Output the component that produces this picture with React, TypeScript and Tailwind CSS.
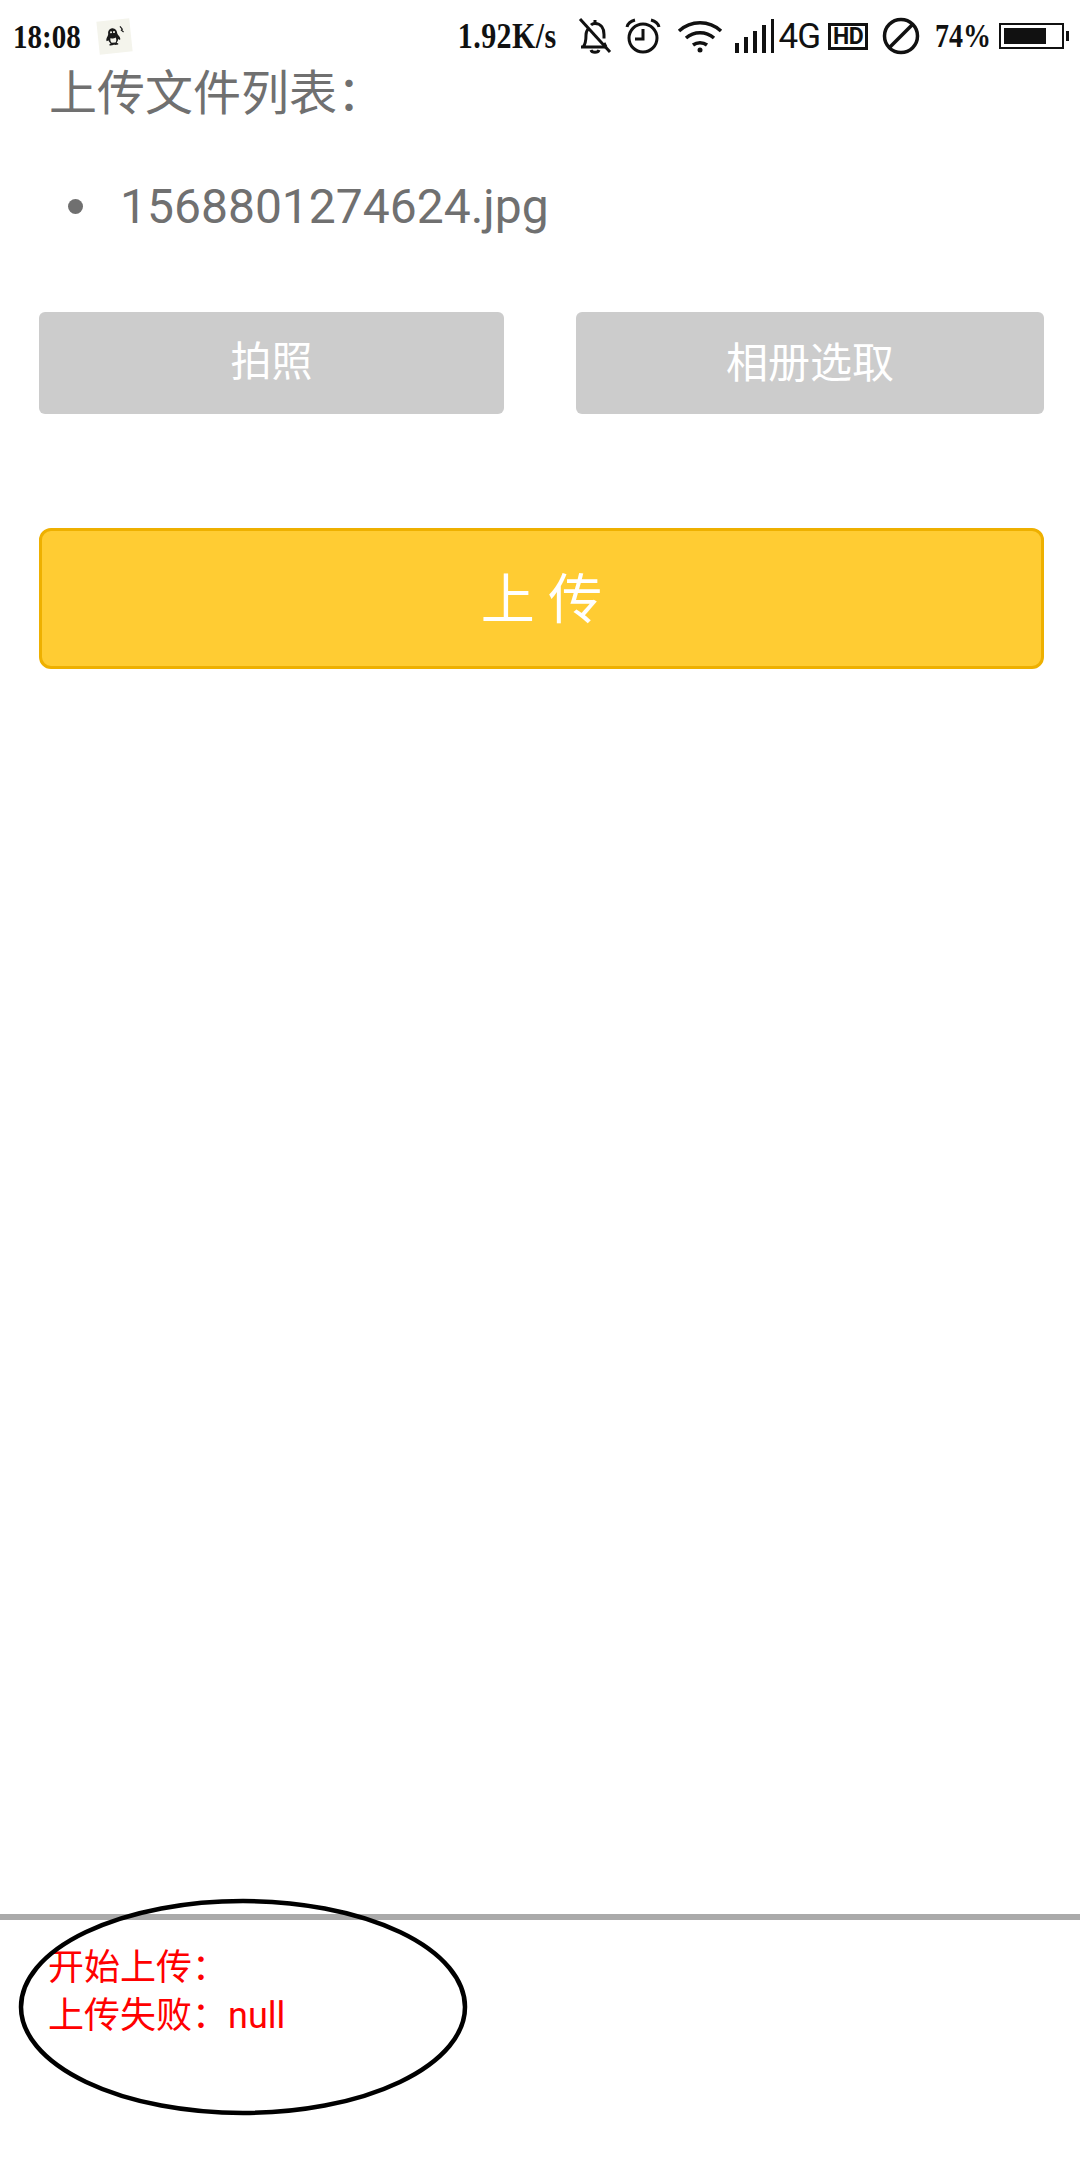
const cjk = "font-['Roboto','Noto_Sans_CJK_SC',sans-serif]";

function Penguin() {
  return (
    <div className="flex h-[33px] w-[33px] rotate-[-6deg] items-center justify-center bg-[#f4f4ec]">
      <svg width="22" height="22" viewBox="0 0 22 22">
        <path d="M9 2c-3 0-4.500 2.500-4.500 5 0 1-.5 2-1.500 3.500C2 12 1.500 14 2.500 14.500L4 13.500C4.500 15 5 16 6 17c-1 .5-2 1-1.500 1.700.8.600 3 .4 4.500 0 1.500.4 3.700.6 4.500 0 .5-.7-.5-1.200-1.500-1.700 1-1 1.500-2 2-3.500l1.500 1c1-.5.500-2.500-.5-4C14 9 13.500 8 13.500 7 13.500 4.500 12 2 9 2z" fill="#1a1a1a" />
        <path d="M6.500 11.500c1.500 1 3.500 1 5 0 .8 1.500.6 3.500-.5 5h-4c-1.100-1.500-1.300-3.500-.5-5z" fill="#f4f4ec" />
        <circle cx="7.500" cy="6" r="1" fill="#f4f4ec" />
        <circle cx="10.500" cy="6" r="1" fill="#f4f4ec" />
        <path d="M17 1l2 3-1 1 2 2" fill="none" stroke="#1a1a1a" strokeWidth="1.200" />
      </svg>
    </div>
  );
}

function StatusBar() {
  return (
    <div className="flex h-[70px] items-center pl-[13px] pr-[11px] pt-[2px] text-[#111] font-['Liberation_Serif',serif] font-bold">
      <span className="scale-y-[1.18] text-[29px] leading-none">18:08</span>
      <div className="ml-[17px]">
        <Penguin />
      </div>
      <span className="ml-auto scale-y-[1.18] text-[30px] leading-none tracking-[0.4px]">1.92K/s</span>

      {/* bell off */}
      <svg className="ml-[22px]" width="34" height="38" viewBox="0 0 34 38" fill="none" stroke="#111" strokeWidth="3">
        <path d="M3 30h24M5 30c3-3 3-7 3-12 0-3 1-5 3-7M13 8c1-1 3-1.500 4-1.500 6 0 9 5 9 11v4M26 26l2 4" />
        <path d="M17 3v3M13 33c1 3 7 3 8 0" />
        <path d="M2 2l30 33" />
      </svg>
      {/* alarm */}
      <svg className="ml-[12px]" width="38" height="38" viewBox="0 0 38 38" fill="none" stroke="#111" strokeWidth="3">
        <circle cx="19" cy="21" r="14" />
        <path d="M19 12v10h-8" />
        <path d="M3 10c1-4 4-6 8-7M35 10c-1-4-4-6-8-7" />
      </svg>
      {/* wifi */}
      <svg className="ml-[15px]" width="46" height="34" viewBox="0 0 46 34" fill="none" stroke="#111" strokeWidth="3.500">
        <path d="M2 12c12-11 30-11 42 0M9 19c8-7 20-7 28 0M16 26c4-3 10-3 14 0" />
        <circle cx="23" cy="31" r="2.500" fill="#111" stroke="none" />
      </svg>
      {/* signal */}
      <svg className="ml-[12px]" width="40" height="34" viewBox="0 0 40 34" fill="#111">
        <rect x="0" y="24" width="4" height="10" />
        <rect x="9" y="18" width="4" height="16" />
        <rect x="18" y="12" width="4" height="22" />
        <rect x="27" y="6" width="4" height="28" />
        <rect x="36" y="0" width="3" height="34" />
      </svg>
      <span className="ml-[3px] font-['Roboto',sans-serif] text-[35px] font-normal leading-none tracking-[-1px]">4G</span>
      <span className="ml-[8px] flex h-[27px] w-[40px] items-center justify-center border-[3px] border-[#111] font-['Roboto',sans-serif] text-[23px] font-bold leading-none tracking-[-0.5px]">
        HD
      </span>
      {/* do not disturb */}
      <svg className="ml-[14px]" width="38" height="38" viewBox="0 0 38 38" fill="none" stroke="#111" strokeWidth="3.500">
        <circle cx="19" cy="19" r="16.500" />
        <path d="M8 30L30 8" />
      </svg>
      <span className="ml-[15px] scale-y-[1.18] text-[28px] leading-none">74%</span>
      {/* battery */}
      <div className="ml-[8px] flex items-center">
        <div className="flex h-[26px] w-[65px] items-stretch border-[2px] border-[#111] p-[3px]">
          <div className="w-[76%] bg-[#111]" />
        </div>
        <div className="ml-[2px] h-[10px] w-[3px] bg-[#111]" />
      </div>
    </div>
  );
}

export default function App() {
  return (
    <div className={`relative flex h-[2160px] w-[1080px] flex-col overflow-hidden bg-white ${cjk}`}>
      <StatusBar />

      <div className="mt-[-6px] pl-[49px] text-[48px] leading-[60px] text-[#707070]">上传文件列表：</div>

      <ul className="mt-[53px] pl-[120px] text-[48px] leading-[60px] text-[#707070]">
        <li className="relative">
          <span className="absolute left-[-52px] top-[22px] h-[15px] w-[15px] rounded-full bg-[#707070]" />
          1568801274624.jpg
        </li>
      </ul>

      <div className="mt-[75px] flex gap-[72px] pl-[39px] pr-[36px]">
        <button className="flex h-[102px] w-[465px] items-center justify-center rounded-[6px] bg-[#cccccc] text-[41px] text-white">
          拍照
        </button>
        <button className="flex h-[102px] w-[468px] items-center justify-center rounded-[6px] bg-[#cccccc] text-[42px] text-white">
          相册选取
        </button>
      </div>

      <div className="mt-[114px] pl-[39px] pr-[36px]">
        <button className="flex h-[141px] w-full items-center justify-center rounded-[12px] border-[3px] border-[#eeb000] bg-[#ffcc33] pt-[3px] text-[54px] text-white">
          上 传
        </button>
      </div>

      <div className="mt-auto h-[246px] border-t-[6px] border-[#aaaaaa] pl-[48px] pt-[24px] text-[36px] leading-[48px] text-[#ff0000]">
        <div>开始上传：</div>
        <div>上传失败：null</div>
      </div>

      {/* hand-drawn annotation */}
      <svg className="absolute left-[15px] top-[1895px]" width="460" height="225" viewBox="0 0 460 225" fill="none">
        <ellipse cx="228" cy="112" rx="222" ry="106" stroke="#000" strokeWidth="4.500" />
      </svg>
    </div>
  );
}
